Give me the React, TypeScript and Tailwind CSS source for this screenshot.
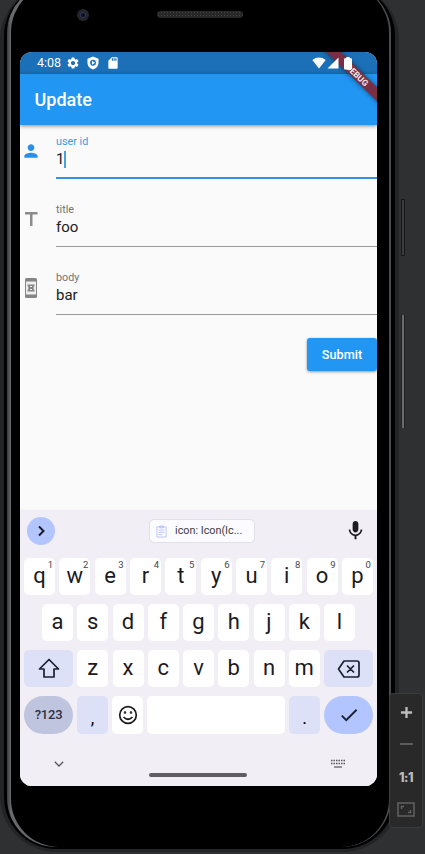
import React from "react";
import { MdSettings, MdPerson, MdMic, MdSdCard, MdCheck } from "react-icons/md";

function Key({ k, sup }: { k: string; sup?: string }) {
  return (
    <div className="relative flex h-[37px] w-[31px] shrink-0 items-center justify-center rounded-[5px] bg-white pb-[2px] font-[Roboto,sans-serif] text-[22px] text-[#1b1b1f]">
      {k}
      {sup && <span className="absolute right-[2px] top-[2px] text-[9.5px] leading-[10px] text-[#45464f]">{sup}</span>}
    </div>
  );
}

function Field({ icon, label, value, active }: { icon: React.ReactNode; label: string; value: string; active?: boolean }) {
  return (
    <div className="flex h-[68px]">
      <div className={`flex w-[36px] shrink-0 pl-[1px] pt-[16px] ${active ? "text-[#2b90e5]" : "text-[#8b8b8b]"}`}>{icon}</div>
      <div className={`flex h-[54px] flex-1 flex-col ${active ? "border-b-2 border-[#3594d5]" : "border-b border-[#999]"}`}>
        <div className={`mt-[10px] text-[10.8px] leading-[13px] ${active ? "text-[#3e99dc]" : "text-[#747474]"}`}>{label}</div>
        <div className="flex items-center text-[15px] leading-[23px] text-[#202020]">
          {value}
          {active && <span className="h-[17px] w-[2px] bg-[#4a9fe0]" />}
        </div>
      </div>
    </div>
  );
}

function TitleIcon() {
  return (
    <svg viewBox="0 0 20 20" className="h-[20px] w-[20px]"><path d="M4 3h12.500v2.600H11.500v11.400H9V5.600H4z" fill="#8b8b8b" /></svg>
  );
}

function BookIcon() {
  return (
    <svg viewBox="0 0 14 22" className="ml-[3px] h-[22px] w-[14px]">
      <rect x="1" y="1" width="12" height="20" rx="1.500" fill="#858585" />
      <rect x="2" y="4.500" width="10" height="13" fill="#eee" />
      <path d="M3.500 7.500h7V9l-.8.500v3l.8.500v1.500h-7V13l.8-.5v-3l-.8-.5z" fill="#858585" />
      <path d="M6 9h2v1H6zM6 12h2v1H6z" fill="#eee" />
    </svg>
  );
}

function Screen() {
  return (
    <div className="relative flex h-[734px] w-[357px] flex-col overflow-hidden rounded-[12px] bg-[#fafafa]">
      <div className="flex h-[22px] shrink-0 items-center bg-[#1b70b7] pl-[17px] text-white">
        <span className="w-[29px] pt-[1px] text-[12.5px]">4:08</span>
        <MdSettings size={14} />
        <svg viewBox="0 0 24 24" className="ml-[6px] h-[14px] w-[14px]">
          <path fill="currentColor" d="M12 1 2.500 4.500V11c0 6 4 10.500 9.500 12 5.500-1.500 9.500-6 9.500-12V4.500z" />
          <circle cx="12" cy="11.500" r="5" fill="#1b70b7" />
          <path d="M10.200 8v7l5.300-3.500z" fill="white" />
        </svg>
        <MdSdCard size={14} className="ml-[6px]" />
        <div className="relative z-20 ml-auto mr-[25px] flex items-center">
          <svg viewBox="0 0 14 12" className="h-[12px] w-[14px]"><path d="M0.300 3Q7-1.800 13.700 3L7 11.500z" fill="white" /></svg>
          <svg viewBox="0 0 12 12" className="ml-[1px] h-[12px] w-[12px]"><path d="M11.500.5v11H.5z" fill="white" /></svg>
          <svg viewBox="0 0 8 13" className="ml-[5px] h-[13px] w-[8px]"><path d="M2.300 0h3.400v1.200H7q1 0 1 1V11.500q0 1-1 1H1q-1 0-1-1V2.200q0-1 1-1h1.300z" fill="white" /></svg>
        </div>
      </div>
      <div className="z-[1] flex h-[51px] shrink-0 items-center bg-[#2196f3] pl-[14.5px] text-[18px] font-medium text-white shadow-[0_1px_4px_rgba(0,0,0,0.45)]">Update</div>
      <div className="flex h-[213px] shrink-0 flex-col">
        <Field active icon={<MdPerson size={20} />} label="user id" value="1" />
        <Field icon={<TitleIcon />} label="title" value="foo" />
        <Field icon={<BookIcon />} label="body" value="bar" />
      </div>
      <div className="flex h-[172px] shrink-0 items-start justify-end">
        <div className="flex h-[33px] w-[70px] items-center justify-center rounded-[3px] bg-[#2196f3] pt-[1px] text-[12.7px] font-medium text-white shadow-[0_1px_3px_rgba(0,0,0,0.4)]">Submit</div>
      </div>
      <div className="flex flex-1 flex-col bg-[#f1eff5] shadow-[0_0_2px_#f1eff5]">
        <div className="flex h-[48px] items-center pb-[5px]">
          <div className="ml-[7px] mt-[-2px] flex h-[28px] w-[28px] items-center justify-center rounded-full bg-[#b3c5fe] text-[#1b1b2b]">
            <svg viewBox="0 0 12 12" className="h-[12px] w-[12px]"><path d="m4 1.500 4.500 4.500L4 10.500" fill="none" stroke="currentColor" strokeWidth="2" /></svg>
          </div>
          <div className="ml-[94px] mt-[-1px] flex h-[24px] w-[106px] items-center rounded-[5px] border border-[#e2e0e7] bg-[#fcfbff] pl-[6px] pt-[1px] text-[10.8px] text-[#3b3b40]">
            <svg viewBox="0 0 12 14" className="mr-[8px] h-[13px] w-[11px]" fill="none" stroke="#b5c2fa">
              <path d="M1 2h10v11H1zM4 1h4v2H4zM3 5.500h6M3 8h6M3 10.500h4" />
            </svg>
            icon: Icon(Ic...
          </div>
          <MdMic size={23} className="ml-[89px] mt-[-2px] text-[#1b1b20]" />
        </div>
        <div className="flex justify-between px-[4px]">
          {"qwertyuiop".split("").map((k, i) => <Key key={k} k={k} sup={String((i + 1) % 10)} />)}
        </div>
        <div className="mt-[9px] flex justify-between px-[22px]">
          {"asdfghjkl".split("").map((k) => <Key key={k} k={k} />)}
        </div>
        <div className="mt-[9px] flex justify-between px-[4px]">
          <div className="flex h-[37px] w-[49px] items-center justify-center rounded-[5px] bg-[#dce1f8]">
            <svg viewBox="0 0 22 22" className="h-[22px] w-[22px]"><path d="M11 1.500 1.500 11H6v8h10v-8h4.500z" fill="none" stroke="#1b2032" strokeWidth="1.700" strokeLinejoin="round" /></svg>
          </div>
          {"zxcvbnm".split("").map((k) => <Key key={k} k={k} />)}
          <div className="flex h-[37px] w-[49px] items-center justify-center rounded-[5px] bg-[#dce1f8]">
            <svg viewBox="0 0 24 20" className="h-[20px] w-[24px]" fill="none" stroke="#1b2032" strokeWidth="1.700"><path d="M7 2h13q2 0 2 2v12q0 2-2 2H7L1.500 10zM10 6.500l7 7m0-7-7 7" strokeLinejoin="round" /></svg>
          </div>
        </div>
        <div className="mt-[9px] flex justify-between px-[4px]">
          <div className="flex h-[38px] w-[49px] items-center justify-center rounded-full bg-[#bfc5df] text-[13px] font-medium tracking-[-0.2px] text-[#2c3042]">?123</div>
          <div className="flex h-[38px] w-[31px] items-center justify-center rounded-[5px] bg-[#dce1f8] pt-[5px] text-[18px]">,</div>
          <div className="flex h-[38px] w-[31px] items-center justify-center rounded-[5px] bg-white">
            <svg viewBox="0 0 20 20" className="h-[20px] w-[20px]" fill="none" stroke="#1b1b1f" strokeWidth="1.700"><circle cx="10" cy="10" r="8.300" /><path d="M5.500 12q4.500 4.500 9 0" /><circle cx="7" cy="7.500" r=".5" /><circle cx="13" cy="7.500" r=".5" /></svg>
          </div>
          <div className="h-[38px] w-[138px] rounded-[5px] bg-white" />
          <div className="flex h-[38px] w-[31px] items-center justify-center rounded-[5px] bg-[#dce1f8] pt-[5px] text-[18px]">.</div>
          <div className="flex h-[38px] w-[49px] items-center justify-center rounded-full bg-[#b3c5fe] text-[#1b2032]"><MdCheck size={22} /></div>
        </div>
        <div className="flex flex-1 items-start pt-[20px]">
          <svg viewBox="0 0 10 6" className="ml-[34px] mt-[7px] h-[6px] w-[10px]" fill="none" stroke="#55545a" strokeWidth="1.300"><path d="m.8.800 4.200 4.200L9.200.8" /></svg>
          <div className="ml-[85px] mt-[19px] h-[4px] w-[98px] rounded-full bg-[#605e64]" />
          <svg viewBox="0 0 14 9" className="ml-[84px] mt-[5px] h-[9px] w-[14px]" stroke="#55545a" strokeWidth="1.400">
            <path d="M0 1.500h14M0 4.500h14" strokeDasharray="1.500 1" /><path d="M3 8h8" strokeWidth="1.200" />
          </svg>
        </div>
      </div>
      <div className="pointer-events-none absolute right-[-33px] top-[16px] z-10 flex h-[10px] w-[110px] rotate-[44deg] items-center justify-center bg-[#792f43] pl-[6px] text-[8.5px] font-bold text-[#f3e5e9] shadow-[0_0_5px_rgba(0,0,0,0.5)]">DEBUG</div>
    </div>
  );
}

export default function App() {
  return (
    <div className="relative h-[854px] w-[425px] overflow-hidden bg-[#2f3032] font-[Roboto,sans-serif]">
      <div className="-mt-[16px] h-[868px] w-[399px] rounded-[56px] bg-[#232425] pb-[3px] pl-[4px] pr-[4px]">
        <div className="h-full rounded-[52px] bg-black pb-[2px] pl-[3px] pr-[4px]">
          <div className="h-full rounded-[49px] bg-gradient-to-r from-[#3b3c3e] via-[#68696c] via-[1%] to-[#4a4b4e] pl-[4px] pr-[2px]">
            <div className="h-full rounded-[48px] bg-black pl-[9px] pt-[25px]">
              <div className="flex h-[43px] items-start">
                <div className="ml-[57px] flex h-[12px] w-[12px] items-center justify-center rounded-full bg-[#24252b]"><div className="h-[6px] w-[6px] rounded-full border border-[#30375b] bg-[#0b0d20]" /></div>
                <div className="ml-[68px] mt-[2px] h-[7px] w-[86px] rounded-full bg-[#272727] bg-[radial-gradient(#444_1px,transparent_1px)] bg-[size:3px_3px]" />
              </div>
              <Screen />
            </div>
          </div>
        </div>
      </div>
      <div className="absolute left-[401px] top-[199px] h-[57px] w-[4px] border border-[#161718] bg-[#3b3c3e]" />
      <div className="absolute left-[401px] top-[315px] h-[113px] w-[4px] border-x border-[#202122] bg-[#6b6c6e]" />
      <div className="absolute left-[389px] top-[693px] flex h-[135px] w-[34px] flex-col items-center rounded-[4px] border border-[#3b3c3e] bg-[#29292a] text-[#bcbcbc]">
        <svg viewBox="0 0 14 14" className="mt-[12px] h-[13px] w-[13px]"><path d="M7 1v12M1 7h12" stroke="currentColor" strokeWidth="2.500" /></svg>
        <div className="mt-[24px] h-[2px] w-[13px] bg-[#5b5b5b]" />
        <div className="mt-[24px] font-[Inter,sans-serif] text-[12.5px] font-extrabold leading-[18px] tracking-[-0.4px]">1:1</div>
        <svg viewBox="0 0 18 15" className="mt-[15px] h-[15px] w-[18px]" fill="none" stroke="#626262" strokeWidth="1.500"><path d="M1 1h16v13H1zM4.500 7V4.500H7M11 10.500h2.500V8" /></svg>
      </div>
    </div>
  );
}
